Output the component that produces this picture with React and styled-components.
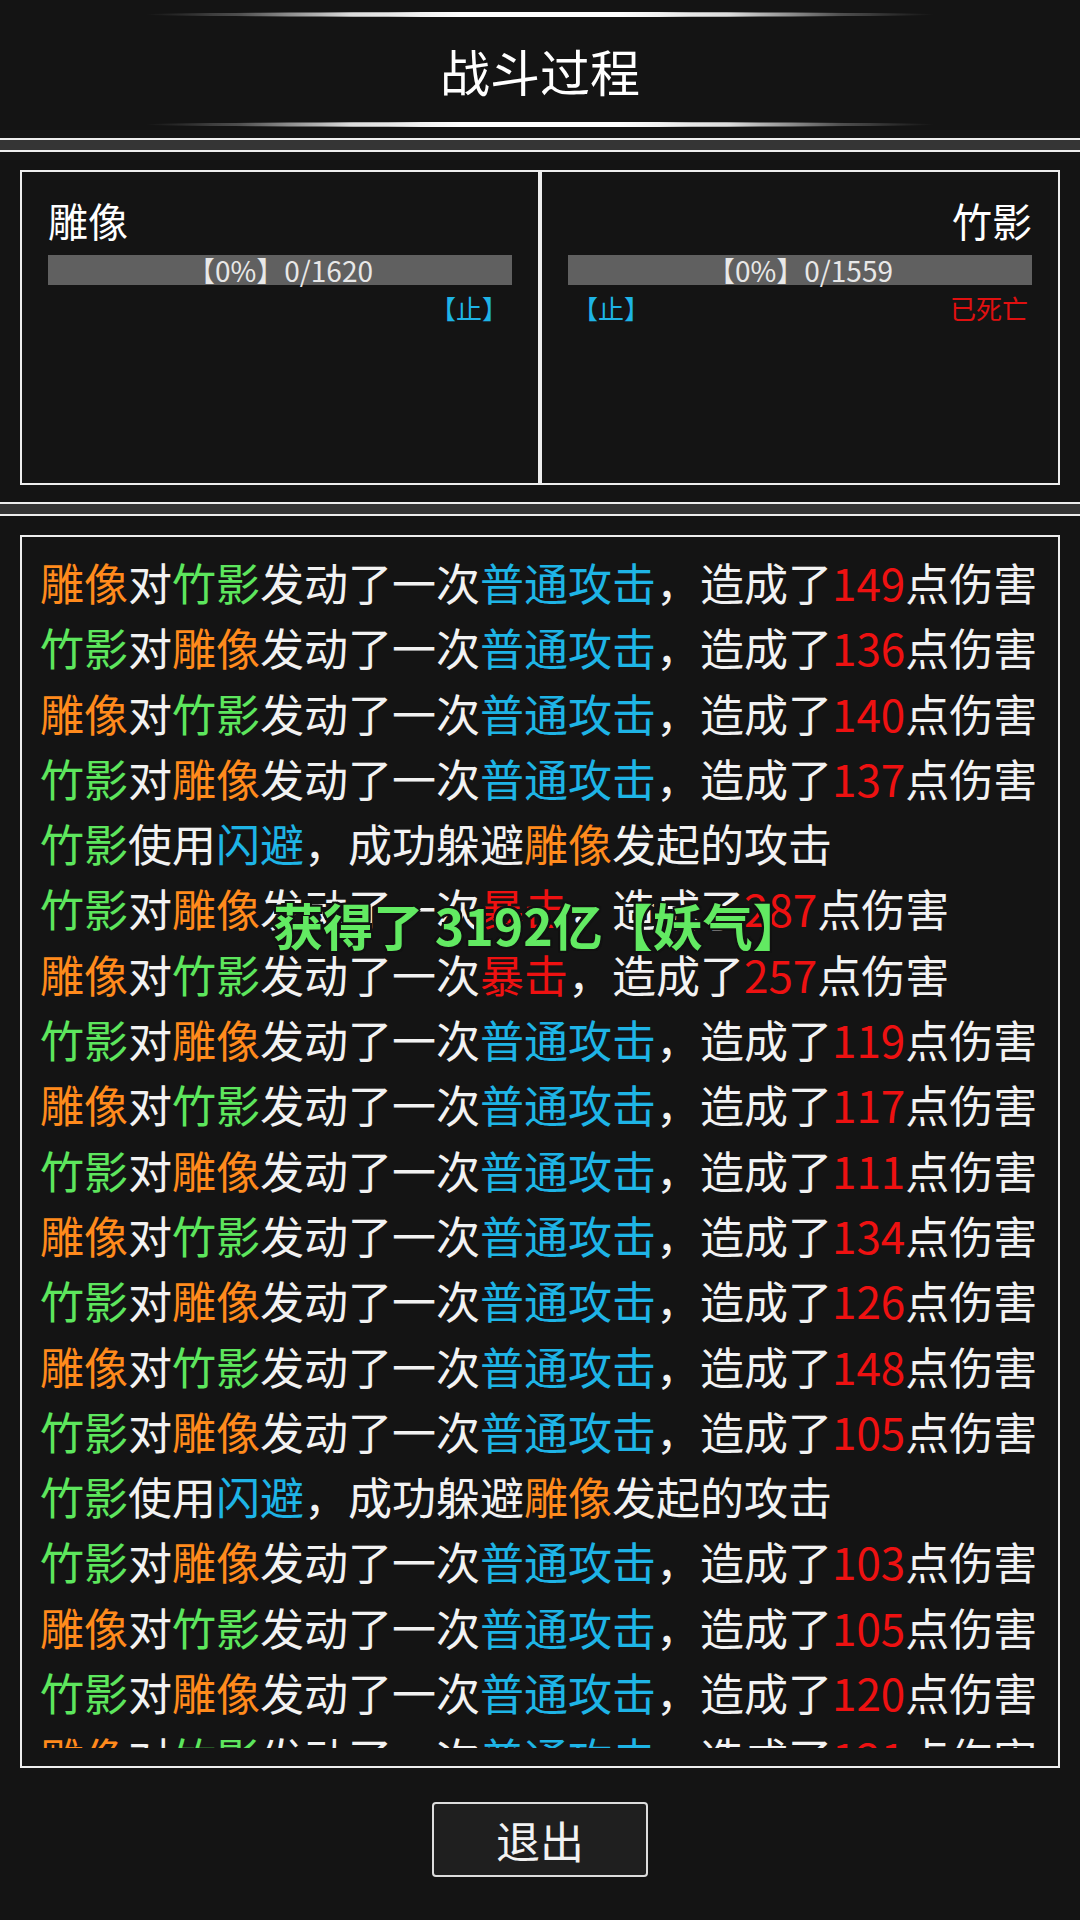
import React from 'react'
import styled, { createGlobalStyle } from 'styled-components'

const GlobalStyle = createGlobalStyle`
    html, body {
        margin: 0;
        padding: 0;
        background: #141414;
    }
    body {
        font-family: "Noto Sans CJK SC", "Noto Sans", sans-serif;
        color: #f0f0f0;
    }
    * {
        box-sizing: border-box;
    }
`

const Page = styled.div`
    position: relative;
    width: 1080px;
    height: 1920px;
    background: #141414;
    overflow: hidden;
`

const Header = styled.header`
    height: 140px;
    border-bottom: 2px solid #eeeeee;
    display: flex;
    flex-direction: column;
    align-items: center;
    justify-content: space-between;
    padding: 12px 0 11px;
`

const Glow = styled.div`
    width: 790px;
    height: 5px;
    border-radius: 50%;
    background: linear-gradient(
        to right,
        rgba(255, 255, 255, 0) 0%,
        rgba(255, 255, 255, 0.25) 12%,
        rgba(255, 255, 255, 0.85) 26%,
        #ffffff 40%,
        #ffffff 60%,
        rgba(255, 255, 255, 0.85) 74%,
        rgba(255, 255, 255, 0.25) 88%,
        rgba(255, 255, 255, 0) 100%
    );
`

const Title = styled.h1`
    margin: 0;
    font-size: 50px;
    font-weight: 400;
    line-height: 1;
    color: #ffffff;
`

const Divider = styled.div`
    height: 12px;
    background: #353535;
    border-bottom: 2px solid #eeeeee;
`

const FighterSection = styled.section`
    padding: 18px 20px 17px;
    border-bottom: 2px solid #eeeeee;
`

const FighterGrid = styled.div`
    display: grid;
    grid-template-columns: 520px 520px;
`

const Fighter = styled.div`
    height: 315px;
    border: 2px solid #eeeeee;
    padding: 24px 26px 0;
    text-align: ${p => (p.$right ? 'right' : 'left')};
`

const Name = styled.div`
    font-size: 40px;
    line-height: 48px;
    color: #ffffff;
`

const HpBar = styled.div`
    margin-top: 11px;
    height: 30px;
    background: #606060;
    color: #e8e8e8;
    font-size: 28px;
    line-height: 30px;
    text-align: center;
`

const StatusRow = styled.div`
    margin-top: 6px;
    height: 34px;
    padding: 0 4px;
    display: flex;
    justify-content: ${p => p.$justify || 'space-between'};
    font-size: 26px;
    line-height: 34px;
`

const Tag = styled.span`
    color: ${p => p.$color};
`

const LogSection = styled.section`
    padding: 19px 20px 0;
    display: flex;
    flex-direction: column;
    align-items: center;
`

const LogBox = styled.div`
    width: 1040px;
    border: 2px solid #eeeeee;
    padding: 13px 18px 18px;
`

const LogList = styled.div`
    height: 1198px;
    overflow: hidden;
`

const LogLine = styled.div`
    font-size: 44px;
    line-height: 65.3px;
    white-space: nowrap;
    color: #f2f2f2;
`

const ExitButton = styled.button`
    margin-top: 34px;
    width: 216px;
    height: 75px;
    border: 2px solid #dddddd;
    border-radius: 4px;
    background: #1f1f1f;
    color: #f2f2f2;
    font-family: "Noto Sans CJK SC", "Noto Sans", sans-serif;
    font-size: 44px;
    line-height: 1;
    padding: 0;
`

const Toast = styled.div`
    position: absolute;
    top: 894px;
    left: 50%;
    transform: translateX(-50%);
    margin-left: -2px;
    white-space: nowrap;
    font-size: 50px;
    font-weight: 700;
    line-height: 60px;
    color: #62ea62;
    text-shadow:
        2px 2px 0 #111, -2px -2px 0 #111, 2px -2px 0 #111, -2px 2px 0 #111,
        0 2px 0 #111, 0 -2px 0 #111, 2px 0 0 #111, -2px 0 0 #111;
`

const COLORS = {
    statue: '#ff8a1c',
    bamboo: '#5de65d',
    skill: '#1eb4e6',
    red: '#ee1111',
}

const NAMES = {
    statue: '雕像',
    bamboo: '竹影',
}

const log = [
    ['statue', 'bamboo', 'normal', 149],
    ['bamboo', 'statue', 'normal', 136],
    ['statue', 'bamboo', 'normal', 140],
    ['bamboo', 'statue', 'normal', 137],
    ['bamboo', 'statue', 'dodge'],
    ['bamboo', 'statue', 'crit', 287],
    ['statue', 'bamboo', 'crit', 257],
    ['bamboo', 'statue', 'normal', 119],
    ['statue', 'bamboo', 'normal', 117],
    ['bamboo', 'statue', 'normal', 111],
    ['statue', 'bamboo', 'normal', 134],
    ['bamboo', 'statue', 'normal', 126],
    ['statue', 'bamboo', 'normal', 148],
    ['bamboo', 'statue', 'normal', 105],
    ['bamboo', 'statue', 'dodge'],
    ['bamboo', 'statue', 'normal', 103],
    ['statue', 'bamboo', 'normal', 105],
    ['bamboo', 'statue', 'normal', 120],
    ['statue', 'bamboo', 'normal', 121],
]

function Who({ id }) {
    return <Tag $color={COLORS[id]}>{NAMES[id]}</Tag>
}

function Entry({ from, to, kind, dmg }) {
    if (kind === 'dodge') {
        return (
            <LogLine>
                <Who id={from} />使用<Tag $color={COLORS.skill}>闪避</Tag>，成功躲避<Who id={to} />发起的攻击
            </LogLine>
        )
    }
    return (
        <LogLine>
            <Who id={from} />对<Who id={to} />发动了一次
            {kind === 'crit'
                ? <Tag $color={COLORS.red}>暴击</Tag>
                : <Tag $color={COLORS.skill}>普通攻击</Tag>}
            ，造成了<Tag $color={COLORS.red}>{dmg}</Tag>点伤害
        </LogLine>
    )
}

export default function App() {
    return (
        <Page>
            <GlobalStyle />
            <Header>
                <Glow />
                <Title>战斗过程</Title>
                <Glow />
            </Header>
            <Divider />

            <FighterSection>
                <FighterGrid>
                    <Fighter>
                        <Name>雕像</Name>
                        <HpBar>【0%】0/1620</HpBar>
                        <StatusRow $justify="flex-end">
                            <Tag $color={COLORS.skill}>【止】</Tag>
                        </StatusRow>
                    </Fighter>
                    <Fighter $right>
                        <Name>竹影</Name>
                        <HpBar>【0%】0/1559</HpBar>
                        <StatusRow>
                            <Tag $color={COLORS.skill}>【止】</Tag>
                            <Tag $color="#e01010">已死亡</Tag>
                        </StatusRow>
                    </Fighter>
                </FighterGrid>
            </FighterSection>
            <Divider />

            <LogSection>
                <LogBox>
                    <LogList>
                        {log.map(([from, to, kind, dmg], i) => (
                            <Entry key={i} from={from} to={to} kind={kind} dmg={dmg} />
                        ))}
                    </LogList>
                </LogBox>
                <ExitButton>退出</ExitButton>
            </LogSection>

            <Toast>获得了 3192亿【妖气】</Toast>
        </Page>
    )
}
